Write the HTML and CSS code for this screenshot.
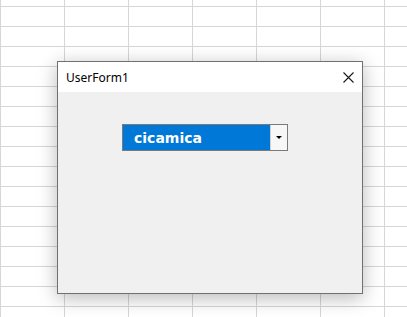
FILE: index.html
```html
<!DOCTYPE html>
<html>
<head>
<meta charset="utf-8">
<link rel="stylesheet" href="styles.css">
</head>
<body>
<div class="sheet">
  <div class="form">
    <div class="titlebar">
      <span class="title">UserForm1</span>
      <svg class="close" width="11" height="11" viewBox="0 0 11 11">
        <path d="M0.5 0.5 L10.5 10.5 M10.5 0.5 L0.5 10.5" stroke="#1a1a1a" stroke-width="1.1" fill="none"/>
      </svg>
    </div>
    <div class="client">
      <div class="combo">
        <div class="value">cicamica</div>
        <div class="dropbtn">
          <svg width="6" height="4" viewBox="0 0 6 4"><path d="M0 0 H6 L3 3 Z" fill="#000"/></svg>
        </div>
      </div>
    </div>
  </div>
</div>
</body>
</html>
```
FILE: styles.css
```css
html, body {
  margin: 0;
  padding: 0;
}
body {
  width: 407px;
  height: 317px;
  overflow: hidden;
  background-color: #ffffff;
  background-image:
    linear-gradient(to right, #d6d6d6 1px, transparent 1px),
    linear-gradient(to bottom, #d6d6d6 1px, transparent 1px);
  background-size: 64px 20px;
  background-position: 0 6px;
}
.sheet {
  padding: 61px 0 0 57px;
}
.form {
  box-sizing: border-box;
  width: 306px;
  height: 233px;
  border: 1px solid #707070;
  background: #f0f0f0;
  display: flex;
  flex-direction: column;
  box-shadow: 0 4px 18px rgba(0, 0, 0, 0.28);
}
.titlebar {
  height: 30px;
  background: #ffffff;
  display: flex;
  align-items: center;
  justify-content: space-between;
  padding: 0 8px 0 8px;
}
.title {
  font-family: "Segoe UI", "Noto Sans", sans-serif;
  font-size: 12px;
  color: #000;
  padding-top: 1px;
}
.close {
  display: block;
  margin-top: 1px;
}
.client {
  flex: 1;
  padding: 32px 0 0 64px;
}
.combo {
  box-sizing: border-box;
  width: 166px;
  height: 27px;
  border: 1px solid #7a7a7a;
  display: flex;
  background: #fff;
}
.value {
  width: 147px;
  background: #0078d7;
  color: #fff;
  font-family: "DejaVu Sans", sans-serif;
  font-weight: bold;
  font-size: 14px;
  line-height: 27px;
  padding-left: 11px;
  box-sizing: border-box;
}
.dropbtn {
  width: 16px;
  border-left: 1px solid #cfcfcf;
  background: #f7f7f7;
  display: flex;
  align-items: center;
  justify-content: center;
}
.dropbtn svg {
  display: block;
  margin-top: 1px;
}
```
